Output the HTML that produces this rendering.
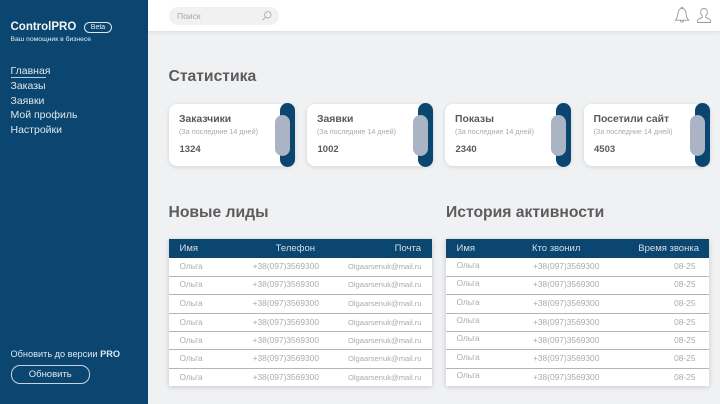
<!DOCTYPE html>
<html lang="ru"><head><meta charset="utf-8"><title>ControlPRO</title>
<style>
html,body{margin:0;padding:0;width:720px;height:404px;overflow:hidden;background:#f0f1f3;font-family:"Liberation Sans",sans-serif}
body{filter:blur(.3px)}
div,span,a{position:absolute;white-space:nowrap;display:block}
.side{left:0;top:0;width:147.5px;height:404px;background:#0a4670}
.top{left:147.5px;top:0;width:572.5px;height:31px;background:#fff;box-shadow:0 1px 4px rgba(0,0,0,.1)}
.w{color:#e8eef2}
.nav{left:10.5px;font-size:10.5px;line-height:14px;color:#dfe7ec}
.h{font-weight:700;font-size:15.7px;line-height:20px;color:#5c5c5c}
.card{top:104px;width:126px;height:62px;background:#fff;border-radius:8px;box-shadow:0 1px 5px rgba(0,0,0,.12)}
.d{left:111px;top:-1px;width:15px;height:64px;border-radius:8px;background:#0a4670}
.g{left:106px;top:11px;width:15px;height:41px;border-radius:8px;background:#aab4c5}
.t{left:10px;top:9px;font-weight:700;font-size:10.4px;line-height:14px;color:#5a5a5a}
.s{left:10px;top:22px;font-size:7.2px;line-height:11px;color:#aaa}
.n{left:10.5px;top:39px;font-weight:700;font-size:9.5px;line-height:13px;color:#5a5a5a}
.tb{top:239px;width:263px;height:147px;background:#fff;box-shadow:0 1px 5px rgba(0,0,0,.18)}
.hd{left:0;top:0;width:263px;height:18.5px;background:#0a4670}
.hd span{top:2.5px;font-size:9.5px;line-height:13px;color:#d5dfe6}
.ln{left:0;width:263px;height:1px;background:#b5b5b5}
.c{font-size:8.4px;line-height:12px;color:#ababab}
.m{font-size:7.6px;line-height:12px;color:#ababab;margin-top:1px}
</style></head><body>
<div class="side"></div>
<div class="w" style="left:10.5px;top:19px;font-weight:700;font-size:11.5px;line-height:16px;color:#f2f5f7">ControlPRO</div>
<div style="left:84px;top:22px;width:26px;height:9px;border:.7px solid #dfe7ec;border-radius:6px;color:#e8eef2;font-size:7px;line-height:9px;text-align:center">Beta</div>
<div class="w" style="left:10.5px;top:34px;font-size:6.8px;line-height:11px">Ваш помощник в бизнесе</div>
<div class="nav" style="top:64px">Главная</div>
<div style="left:10.5px;top:76.5px;width:35px;height:1px;background:#b9c9d5"></div>
<div class="nav" style="top:79px">Заказы</div>
<div class="nav" style="top:93.5px">Заявки</div>
<div class="nav" style="top:108px">Мой профиль</div>
<div class="nav" style="top:123px">Настройки</div>
<div class="nav" style="top:347px;font-size:9.2px">Обновить до версии <b>PRO</b></div>
<div style="left:10.5px;top:365px;width:77.5px;height:16.5px;border:.8px solid #c7d5df;border-radius:9px;color:#dfe7ec;font-size:9.5px;line-height:17px;text-align:center">Обновить</div>

<div class="top"></div>
<div style="left:169px;top:7px;width:110px;height:18px;border-radius:9px;background:#f0f1f3"></div>
<div style="left:177px;top:10px;font-size:8.5px;line-height:12px;color:#a5a5a5">Поиск</div>
<svg style="position:absolute;left:261px;top:10px" width="12" height="12" viewBox="0 0 12 12" fill="none" stroke="#aaa" stroke-width=".9"><circle cx="6.8" cy="4.8" r="3.2"/><path d="M4.4 7.2 1.6 10"/></svg>
<svg style="position:absolute;left:672.5px;top:6px" width="18" height="18" viewBox="0 0 18 18" fill="none" stroke="#9a9a9a" stroke-width=".9"><path d="M2.2 14.2c1.7-1.6 2.4-3 2.6-5.4C5 5.4 6.200 2.400 9 2.400s4 3 4.200 6.400c.2 2.400.9 3.800 2.600 5.400z"/><path d="M8 2.400c0-1.600 2-1.600 2 0M7.400 14.400c.2 2.200 3 2.200 3.200 0"/></svg>
<svg style="position:absolute;left:696px;top:6px" width="16" height="18" viewBox="0 0 16 18" fill="none" stroke="#9a9a9a" stroke-width=".9"><path d="M8 2.500c2.300 0 3.500 1.500 3.400 3.600-.1 1.800-.8 3.100-1.600 3.900v1.600c1.700.6 4.300 1.100 4.800 3.300v1.600H1.400v-1.600c.5-2.200 3.100-2.700 4.800-3.300V10C5.400 9.200 4.700 7.900 4.600 6.100 4.500 4 5.700 2.500 8 2.500z"/></svg>

<div class="h" style="left:168.5px;top:67px">Статистика</div>

<div class="card" style="left:169px"><span class="d"></span><span class="g"></span><span class="t">Заказчики</span><span class="s">(За последние 14 дней)</span><span class="n">1324</span></div>
<div class="card" style="left:307px"><span class="d"></span><span class="g"></span><span class="t">Заявки</span><span class="s">(За последние 14 дней)</span><span class="n">1002</span></div>
<div class="card" style="left:445px"><span class="d"></span><span class="g"></span><span class="t">Показы</span><span class="s">(За последние 14 дней)</span><span class="n">2340</span></div>
<div class="card" style="left:583.5px"><span class="d"></span><span class="g"></span><span class="t">Посетили сайт</span><span class="s">(За последние 14 дней)</span><span class="n">4503</span></div>

<div class="h" style="left:168.5px;top:203px">Новые лиды</div>
<div class="h" style="left:446px;top:203px">История активности</div>

<div class="tb" style="left:169px">
<div class="hd"><span style="left:10.5px">Имя</span><span style="right:117px">Телефон</span><span style="right:11px">Почта</span></div>
<div class="ln" style="top:36.5px"></div><div class="ln" style="top:55px"></div><div class="ln" style="top:73.5px"></div><div class="ln" style="top:92px"></div><div class="ln" style="top:110px"></div><div class="ln" style="top:128.5px"></div>
<span class="c" style="left:10.5px;top:21px">Ольга</span><span class="c" style="right:113px;top:21px">+38(097)3569300</span><span class="m" style="right:10.5px;top:21px">Olgaarsenuk@mail.ru</span>
<span class="c" style="left:10.5px;top:39px">Ольга</span><span class="c" style="right:113px;top:39px">+38(097)3569300</span><span class="m" style="right:10.5px;top:39px">Olgaarsenuk@mail.ru</span>
<span class="c" style="left:10.5px;top:58px">Ольга</span><span class="c" style="right:113px;top:58px">+38(097)3569300</span><span class="m" style="right:10.5px;top:58px">Olgaarsenuk@mail.ru</span>
<span class="c" style="left:10.5px;top:76.5px">Ольга</span><span class="c" style="right:113px;top:76.5px">+38(097)3569300</span><span class="m" style="right:10.5px;top:76.5px">Olgaarsenuk@mail.ru</span>
<span class="c" style="left:10.5px;top:95px">Ольга</span><span class="c" style="right:113px;top:95px">+38(097)3569300</span><span class="m" style="right:10.5px;top:95px">Olgaarsenuk@mail.ru</span>
<span class="c" style="left:10.5px;top:113px">Ольга</span><span class="c" style="right:113px;top:113px">+38(097)3569300</span><span class="m" style="right:10.5px;top:113px">Olgaarsenuk@mail.ru</span>
<span class="c" style="left:10.5px;top:132px">Ольга</span><span class="c" style="right:113px;top:132px">+38(097)3569300</span><span class="m" style="right:10.5px;top:132px">Olgaarsenuk@mail.ru</span>
</div>

<div class="tb" style="left:446px">
<div class="hd"><span style="left:10.5px">Имя</span><span style="left:86px">Кто звонил</span><span style="right:10px">Время звонка</span></div>
<div class="ln" style="top:36.5px"></div><div class="ln" style="top:55px"></div><div class="ln" style="top:73.5px"></div><div class="ln" style="top:92px"></div><div class="ln" style="top:110px"></div><div class="ln" style="top:128.5px"></div>
<span class="c" style="left:10.5px;top:20px">Ольга</span><span class="c" style="left:87px;top:21px">+38(097)3569300</span><span class="c" style="right:13.5px;top:21px">08-25</span>
<span class="c" style="left:10.5px;top:38px">Ольга</span><span class="c" style="left:87px;top:39px">+38(097)3569300</span><span class="c" style="right:13.5px;top:39px">08-25</span>
<span class="c" style="left:10.5px;top:56.5px">Ольга</span><span class="c" style="left:87px;top:58px">+38(097)3569300</span><span class="c" style="right:13.5px;top:58px">08-25</span>
<span class="c" style="left:10.5px;top:75px">Ольга</span><span class="c" style="left:87px;top:76.5px">+38(097)3569300</span><span class="c" style="right:13.5px;top:76.5px">08-25</span>
<span class="c" style="left:10.5px;top:93px">Ольга</span><span class="c" style="left:87px;top:95px">+38(097)3569300</span><span class="c" style="right:13.5px;top:95px">08-25</span>
<span class="c" style="left:10.5px;top:112px">Ольга</span><span class="c" style="left:87px;top:113px">+38(097)3569300</span><span class="c" style="right:13.5px;top:113px">08-25</span>
<span class="c" style="left:10.5px;top:130px">Ольга</span><span class="c" style="left:87px;top:132px">+38(097)3569300</span><span class="c" style="right:13.5px;top:132px">08-25</span>
</div>
</body></html>
